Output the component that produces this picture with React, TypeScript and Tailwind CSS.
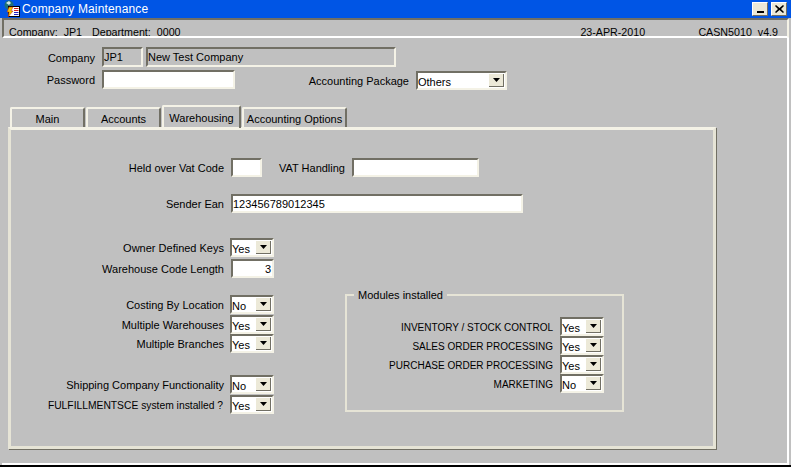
import type { ReactNode } from "react";

const sunken =
  "border-2 border-t-[#716f64] border-l-[#716f64] border-r-[#f4f2e6] border-b-[#f4f2e6]";

const Label = ({
  w,
  pr = "pr-[7px]",
  size = "",
  children,
}: {
  w: string;
  pr?: string;
  size?: string;
  children: ReactNode;
}) => (
  <div className={`${w} ${pr} ${size} shrink-0 pt-[2px] text-right whitespace-nowrap`}>{children}</div>
);

const Field = ({
  w,
  h = "h-[19px]",
  value = "",
  gray = false,
  right = false,
}: {
  w: string;
  h?: string;
  value?: string;
  gray?: boolean;
  right?: boolean;
}) => (
  <div
    className={`${w} ${h} ${sunken} ${gray ? "bg-[#c0c0c0]" : "bg-white"} ${
      right ? "text-right pr-[1px]" : ""
    } shrink-0 leading-[16px] overflow-hidden whitespace-nowrap`}
  >
    {value}
  </div>
);

const Combo = ({ w = "w-[44px]", value }: { w?: string; value: string }) => (
  <div className={`${w} h-[19px] ${sunken} bg-white shrink-0 flex items-center justify-between`}>
    <span className="leading-[14px] pt-[2px]">{value}</span>
    <span className="w-[15px] h-[13px] mr-[1px] bg-[#ece9d8] border-r border-b border-r-[#716f64] border-b-[#716f64] flex items-center justify-center">
      <svg width="7" height="4" viewBox="0 0 7 4">
        <path d="M0 0h7L3.5 4z" fill="#000" />
      </svg>
    </span>
  </div>
);

const Tab = ({ w, active = false, children }: { w: string; active?: boolean; children: ReactNode }) => (
  <div
    className={`${w} ${
      active ? "h-[23px] relative top-[1px] leading-[23px]" : "h-[20px] leading-[20px]"
    } border-t-2 border-l-2 border-r-2 border-t-[#f4f2e6] border-l-[#f4f2e6] border-r-[#716f64] rounded-t-[2px] text-center whitespace-nowrap`}
  >
    {children}
  </div>
);

const LeftRow = ({
  mt = "",
  label,
  children,
}: {
  mt?: string;
  label: string;
  children: ReactNode;
}) => (
  <div className={`flex items-center h-[19px] ${mt}`}>
    <Label w="w-[222px]" pr="pr-[6px]">
      {label}
    </Label>
    {children}
  </div>
);

const ModuleRow = ({ label, value }: { label: string; value: string }) => (
  <div className="flex items-center h-[19px]">
    <Label w="w-[213px]" size="text-[10px]">
      {label}
    </Label>
    <Combo value={value} />
  </div>
);

export default function App() {
  return (
    <div className="w-[791px] h-[467px] overflow-hidden bg-black font-['Liberation_Sans',Arial,sans-serif] text-[11px] text-black">
      <div className="h-[465px] bg-[#c0c0c0] flex flex-col">
        {/* title bar */}
        <div className="h-[18px] bg-[#0055e5] flex items-center shrink-0">
          <svg width="18" height="18" viewBox="0 0 18 18" className="ml-[3px]">
            <circle cx="6" cy="5" r="4.500" fill="#1f6f78" />
            <path d="M3 3l3-2 2 2-2 2z" fill="#cfe6e6" />
            <rect x="5.500" y="6.500" width="11" height="10" fill="#fff" stroke="#000" />
            <path d="M6 7h4l-2 4h2l-5 6 1-5H4z" fill="#f4c400" stroke="#b02020" strokeWidth="0.5" />
            <path d="M11 8.500h4.500M11 10.500h4.500" stroke="#d02020" />
            <path d="M11 12.500h4.500M11 14.500h4.500" stroke="#2020c0" />
          </svg>
          <span className="ml-[1px] text-white text-[12px] tracking-[0.15px] leading-[18px] whitespace-nowrap">
            Company Maintenance
          </span>
          <div className="ml-auto mr-[4px] flex gap-[3px]">
            <div className="w-[16px] h-[14px] bg-[#ece9d8] border border-t-white border-l-white border-r-[#716f64] border-b-[#716f64] flex items-end justify-center pb-[2px]">
              <div className="w-[7px] h-[2px] bg-black" />
            </div>
            <div className="w-[16px] h-[14px] bg-[#ece9d8] border border-t-white border-l-white border-r-[#716f64] border-b-[#716f64] flex items-center justify-center">
              <svg width="9" height="8" viewBox="0 0 9 8">
                <path d="M1 0l3.500 3L8 0l1 1-3 3 3 3-1 1-3.500-3L1 8 0 7l3-3-3-3z" fill="#000" />
              </svg>
            </div>
          </div>
        </div>

        {/* status bar */}
        <div className="h-[20px] ml-[2px] mr-[2px] shrink-0 flex items-start justify-between overflow-hidden border-t-2 border-l-2 border-r-2 border-b-2 border-t-[#716f64] border-l-[#716f64] border-r-[#f4f2e6] border-b-white text-[10.7px] leading-[14px] pt-[5px] pl-[5px] pr-[9px] whitespace-nowrap">
          <div className="flex">
            <span className="w-[83px] whitespace-pre">Company:  JP1</span>
            <span className="whitespace-pre">Department:  0000</span>
          </div>
          <div className="flex">
            <span className="w-[118px] whitespace-pre">23-APR-2010</span>
            <span className="whitespace-pre">CASN5010  v4.9</span>
          </div>
        </div>

        {/* body */}
        <div className="flex-1 ml-[2px] mr-[2px] border-r-2 border-b-2 border-r-white border-b-white pl-[6px] pt-[9px] flex flex-col min-h-0">
          <div className="flex items-center h-[20px]">
            <Label w="w-[94px]">Company</Label>
            <Field w="w-[41px]" h="h-[20px]" value="JP1" gray />
            <Field w="w-[250px] ml-[3px]" h="h-[20px]" value="New Test Company" gray />
          </div>
          <div className="flex items-start h-[21px] mt-[3px]">
            <Label w="w-[94px]">Password</Label>
            <Field w="w-[133px]" />
            <Label w="w-[181px] mt-[1px]">Accounting Package</Label>
            <Combo w="w-[91px] mt-[1px]" value="Others" />
          </div>

          {/* tabs */}
          <div className="flex items-end h-[23px] mt-[13px] pl-[2px] gap-[1px]">
            <Tab w="w-[75px]">Main</Tab>
            <Tab w="w-[75px]">Accounts</Tab>
            <Tab w="w-[79px]" active>
              Warehousing
            </Tab>
            <Tab w="w-[105px]">Accounting Options</Tab>
          </div>

          {/* panel */}
          <div className="w-[708px] h-[322px] bg-[#c0c0c0] border-[3px] border-t-[#f4f2e6] border-l-[#e6e4d6] border-r-[#e6e4d6] border-b-[#e6e4d6] shadow-[1px_1px_0_#716f64] pt-[28px] shrink-0">
            <div className="flex items-center h-[19px] -ml-[3px]">
              <Label w="w-[223px]">Held over Vat Code</Label>
              <Field w="w-[31px]" />
              <Label w="w-[90px]">VAT Handling</Label>
              <Field w="w-[127px]" />
            </div>
            <div className="flex items-center h-[19px] -ml-[3px] mt-[17px]">
              <Label w="w-[223px]">Sender Ean</Label>
              <Field w="w-[292px]" value="123456789012345" />
            </div>

            <div className="flex -ml-[3px] mt-[25px]">
              <div className="w-[337px] shrink-0">
                <LeftRow label="Owner Defined Keys">
                  <Combo value="Yes" />
                </LeftRow>
                <LeftRow mt="mt-[2px]" label="Warehouse Code Length">
                  <Field w="w-[43px] ml-[1px]" value="3" right />
                </LeftRow>
                <LeftRow mt="mt-[17px]" label="Costing By Location">
                  <Combo value="No" />
                </LeftRow>
                <LeftRow mt="mt-[1px]" label="Multiple Warehouses">
                  <Combo value="Yes" />
                </LeftRow>
                <LeftRow label="Multiple Branches">
                  <Combo value="Yes" />
                </LeftRow>
                <LeftRow mt="mt-[22px]" label="Shipping Company Functionality">
                  <Combo value="No" />
                </LeftRow>
                <div className="flex items-center h-[19px] mt-[1px]">
                  <Label w="w-[222px]" size="text-[10.3px]">
                    FULFILLMENTSCE system installed ?
                  </Label>
                  <Combo value="Yes" />
                </div>
              </div>

              <fieldset className="w-[279px] h-[123px] mt-[51px] border-2 border-[#e6e4d6] pt-[16px]">
                <legend className="ml-[7px] px-[4px] leading-[12px]">Modules installed</legend>
                <ModuleRow label="INVENTORY / STOCK CONTROL" value="Yes" />
                <ModuleRow label="SALES ORDER PROCESSING" value="Yes" />
                <ModuleRow label="PURCHASE ORDER PROCESSING" value="Yes" />
                <ModuleRow label="MARKETING" value="No" />
              </fieldset>
            </div>
          </div>
        </div>
      </div>
    </div>
  );
}
